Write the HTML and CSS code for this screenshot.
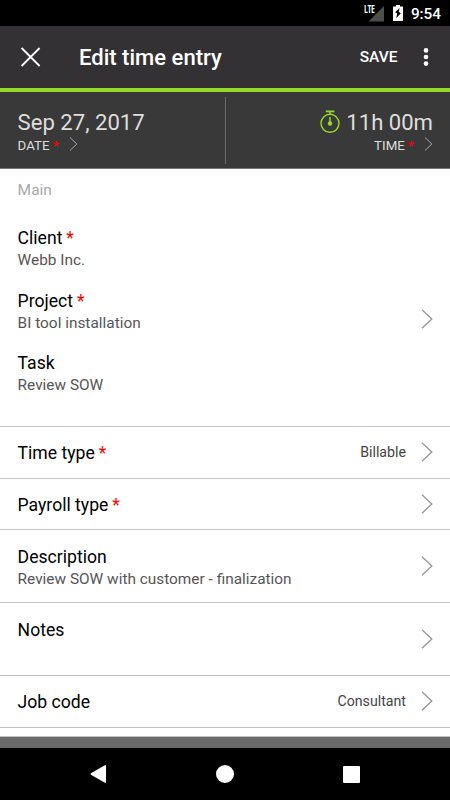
FILE: index.html
```html
<!DOCTYPE html>
<html lang="en">
<head>
<meta charset="utf-8">
<title>Edit time entry</title>
<link rel="stylesheet" href="styles.css">
</head>
<body>
<svg class="defs" width="0" height="0"><symbol id="chevron" viewBox="0 0 12 20"><path d="M1 .8 10.800 10 1 19.200" fill="none" stroke="currentColor" stroke-width="1.400"/></symbol></svg>
<div class="status">
  <svg class="signal" width="20" height="18" viewBox="0 0 20 18"><path d="M19 1v15.500H3.500z" fill="#4d4d4d"/></svg>
  <span class="lte">LTE</span>
  <svg class="battery" width="10" height="16" viewBox="0 0 10 16"><path d="M3 0h4v1.500h3V16H0V1.500h3z" fill="#fff"/><path d="M6.600 3 2.200 7.200 4.200 8.600 3.200 13.200 7.800 8.200 5.800 6.800z" fill="#000"/></svg>
  <span class="clock">9:54</span>
</div>
<header class="toolbar">
  <svg class="close" width="20" height="20" viewBox="0 0 20 20"><path d="M.6 1 18.600 19M18.600 1 .6 19" stroke="#fff" stroke-width="1.800"/></svg>
  <h1 class="title">Edit time entry</h1>
  <span class="save">SAVE</span>
  <svg class="more" width="6" height="20" viewBox="0 0 6 20" fill="#fff"><circle cx="3" cy="3.400" r="2.300"/><circle cx="3" cy="10" r="2.300"/><circle cx="3" cy="16.600" r="2.300"/></svg>
</header>
<section class="summary">
  <div class="cell">
    <div class="big">Sep 27, 2017</div>
    <div class="caption">DATE <b class="req">*</b><svg class="small-chevron"><use href="#chevron"/></svg></div>
  </div>
  <div class="divider"></div>
  <div class="cell right">
    <div class="big"><svg class="watch" width="20" height="24" viewBox="0 0 20 24" fill="none" stroke="#95d92b"><circle cx="10" cy="13.300" r="9" stroke-width="1.400"/><path d="M5.800 1.400h8.600" stroke-width="1.800"/><path d="M10 2v2.500M10 7v6" stroke-width="1.500"/><circle cx="10" cy="13.500" r="2.200" fill="#95d92b" stroke="none"/></svg><span class="duration">11h 00m</span></div>
    <div class="caption">TIME <b class="req">*</b><svg class="small-chevron"><use href="#chevron"/></svg></div>
  </div>
</section>
<main>
  <section class="group">
    <div class="fields">
      <h2 class="heading">Main</h2>
      <div class="field"><div class="label">Client <b class="req">*</b></div><div class="value">Webb Inc.</div></div>
      <div class="field"><div class="label">Project <b class="req">*</b></div><div class="value">BI tool installation</div></div>
      <div class="field"><div class="label">Task</div><div class="value">Review SOW</div></div>
    </div>
    <svg class="chevron"><use href="#chevron"/></svg>
  </section>
  <div class="row"><div class="label">Time type <b class="req">*</b></div><span class="choice">Billable</span><svg class="chevron"><use href="#chevron"/></svg></div>
  <div class="row"><div class="label">Payroll type <b class="req">*</b></div><svg class="chevron"><use href="#chevron"/></svg></div>
  <div class="row tall"><div class="text"><div class="label">Description</div><div class="value">Review SOW with customer - finalization</div></div><svg class="chevron"><use href="#chevron"/></svg></div>
  <div class="row tall"><div class="text"><div class="label">Notes</div></div><svg class="chevron"><use href="#chevron"/></svg></div>
  <div class="row"><div class="label">Job code</div><span class="choice">Consultant</span><svg class="chevron"><use href="#chevron"/></svg></div>
  <div class="rest"></div>
</main>
<div class="band"></div>
<nav class="nav">
  <svg width="18" height="20" viewBox="0 0 18 20"><path d="M16.300 1.800v16.400L2.300 10z" fill="#fff" stroke="#fff" stroke-width="1.500" stroke-linejoin="round"/></svg>
  <svg width="18" height="18" viewBox="0 0 18 18"><circle cx="9" cy="9" r="9" fill="#fff"/></svg>
  <svg width="17" height="17" viewBox="0 0 17 17"><rect width="17" height="17" rx="1" fill="#fff"/></svg>
</nav>
</body>
</html>
```

FILE: styles.css
```css
* { box-sizing: border-box; }
body {
  margin: 0;
  width: 450px;
  height: 800px;
  overflow: hidden;
  display: flex;
  flex-direction: column;
  background: #fff;
  color: #000;
  font-family: Roboto, sans-serif;
}
svg { display: block; flex: none; }
.defs { position: absolute; }
.status {
  height: 26px;
  flex: none;
  background: #000;
  color: #fff;
  display: flex;
  justify-content: flex-end;
  padding: 5px 9px 0 0;
  position: relative;
}
.signal { margin-right: 8px; }
.lte {
  position: absolute;
  left: 364px;
  top: 4px;
  font: 700 10px/10px "Open Sans", sans-serif;
  letter-spacing: -0.5px;
  transform: scaleX(.68);
  transform-origin: left;
}
.battery { margin-right: 8px; }
.clock { font-size: 15.3px; line-height: 18px; font-weight: 500; }
.toolbar {
  height: 66px;
  flex: none;
  background: #333133;
  border-bottom: 4px solid #95d92b;
  color: #fff;
  display: flex;
  align-items: center;
  padding: 0 21px;
}
.title { margin: 0 auto 0 38px; font-size: 22.05px; font-weight: 500; }
.save { font-size: 15.5px; font-weight: 500; margin-right: 25.500px; }
.summary {
  height: 77px;
  flex: none;
  background: #3a393a;
  border-bottom: 1px solid #777;
  color: #dedede;
  display: flex;
}
.cell { flex: 1; padding: 17px 17px 0 17.600px; }
.big { font-size: 22.1px; line-height: 26px; display: flex; align-items: center; height: 26px; }
.caption { font-size: 13.3px; line-height: 18px; display: flex; align-items: center; height: 21px; white-space: pre; }
.right .big, .right .caption { justify-content: flex-end; }
.watch { margin: 0 6px 0 0; }
.divider { width: 1px; margin: 5px 0 4px; background: #6b6b6b; }
.small-chevron { width: 9px; height: 14px; margin: -4px 0 0 10px; color: #aaa; }
.req { color: #f00; font-weight: 400; }
.caption .req { font-weight: 500; }
main { flex: 1; }
.group { height: 258px; border-bottom: 1px solid #c3c3c3; display: flex; padding: 0 17px 0 17.600px; }
.fields { flex: 1; }
.heading { margin: 11px 0 27px; font-size: 15.5px; font-weight: 400; line-height: 20px; color: #aaa; }
.field { height: 62.500px; }
.label { font-size: 17.6px; line-height: 22px; }
.label .req { margin-left: -0.500px; }
.value { font-size: 15.4px; line-height: 22px; color: #555; }
.group .chevron { margin-top: 140px; }
.chevron { width: 12px; height: 20px; color: #999; }
.row { height: 51.600px; border-bottom: 1px solid #c3c3c3; display: flex; align-items: center; padding: 0 17px 0 17.600px; }
.row > .label, .text { flex: 1; }
.row > .label { padding-top: 2px; }
.tall { height: 73px; }
.text { align-self: flex-start; padding-top: 16px; }
.choice { font-size: 14.2px; color: #444; margin-right: 15px; }
.rest { height: 9px; border-bottom: 1px solid #c3c3c3; }
.band { height: 11px; flex: none; background: #6a6a6a; }
.nav {
  height: 52px;
  flex: none;
  background: #000;
  display: flex;
  align-items: center;
  justify-content: space-between;
  padding: 0 90px 0 89px;
}
```
